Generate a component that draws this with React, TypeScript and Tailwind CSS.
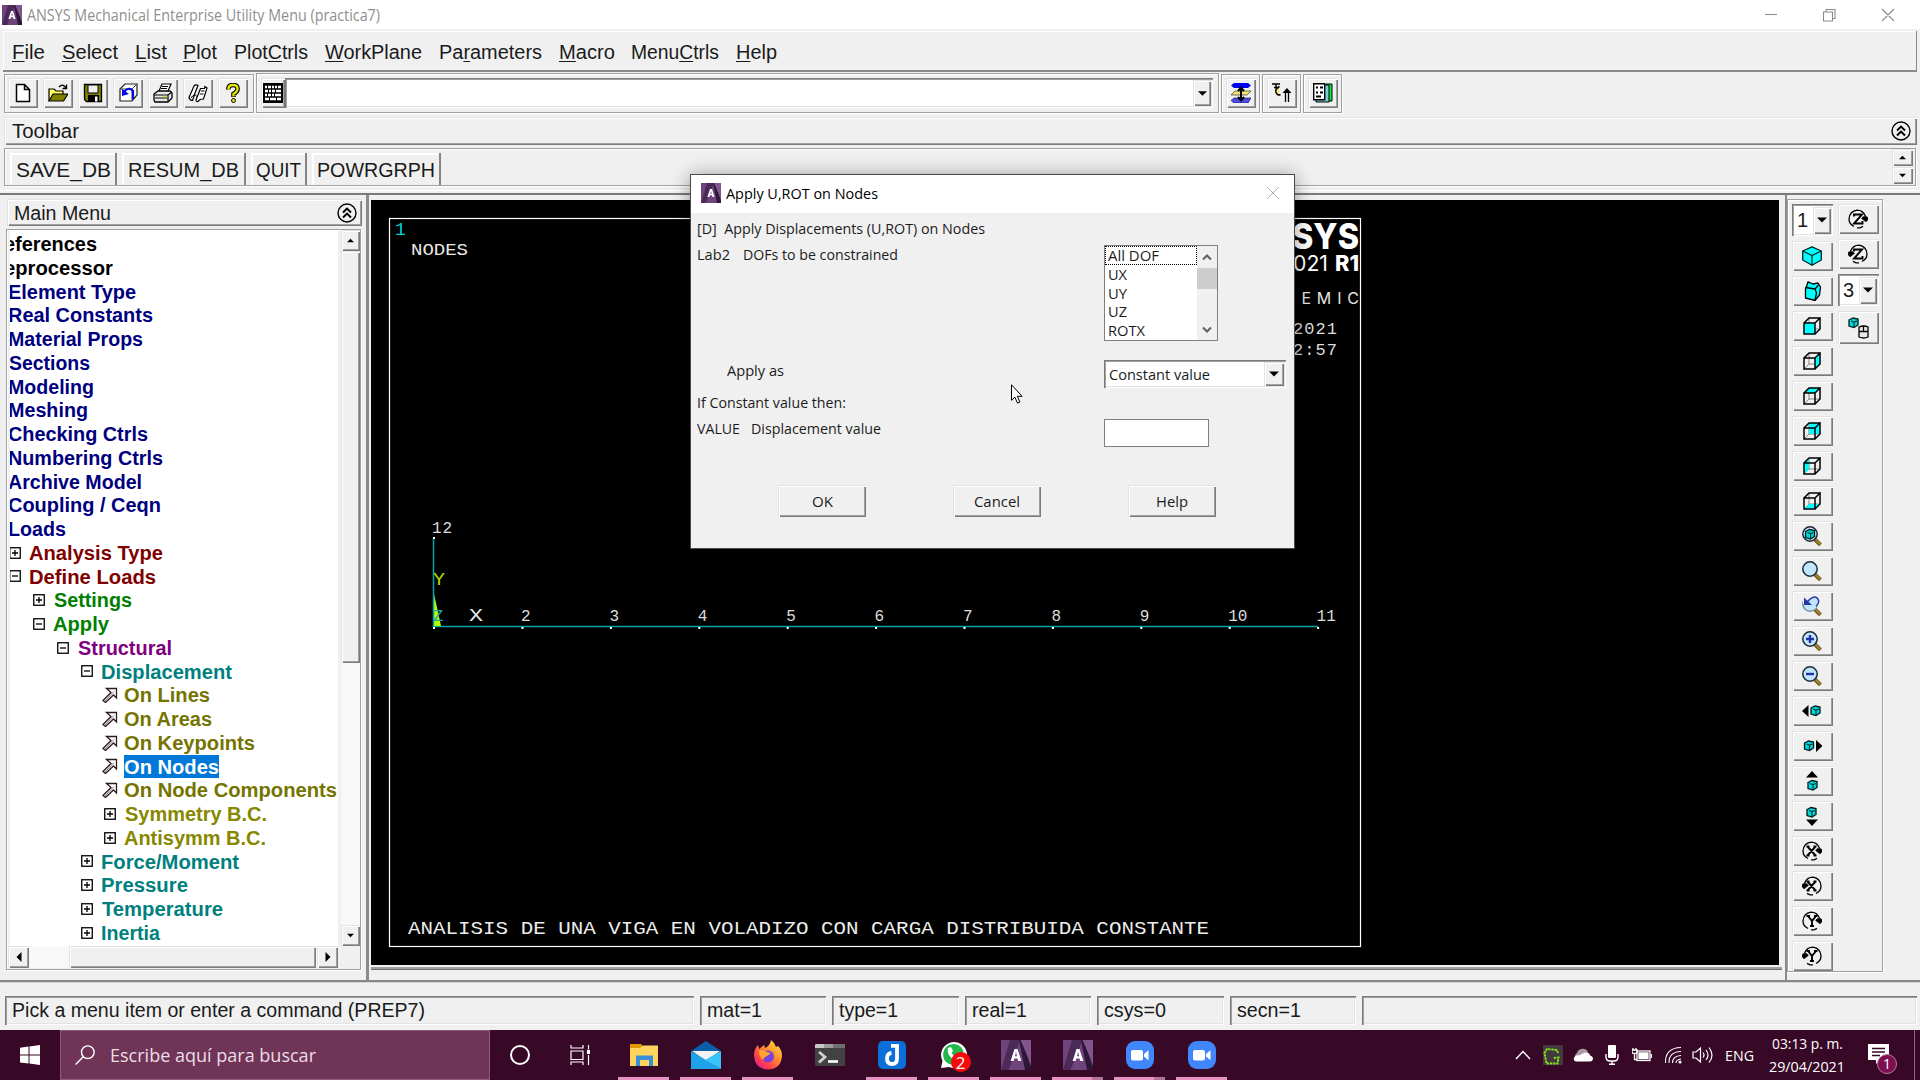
import React, { useLayoutEffect, useRef, useState } from "react";

const RAISED = "bg-[#f0f0f0] shadow-[inset_1px_1px_0_#e3e3e3,inset_2px_2px_0_#fff,inset_-1px_-1px_0_#7a7a7a,inset_-2px_-2px_0_#a0a0a0]";
const SUNKEN = "shadow-[inset_1px_1px_0_#7a7a7a,inset_2px_2px_0_#a0a0a0,inset_-1px_-1px_0_#fff,inset_-2px_-2px_0_#e3e3e3]";
const GROOVE = "border border-[#a0a0a0] shadow-[inset_1px_1px_0_#fff,1px_1px_0_#fff]";
const ARIAL = "font-['Liberation_Sans',Arial,sans-serif]";
const SEGOE = "font-['Open_Sans','Noto_Sans',sans-serif]";

/* Single line of text stretched horizontally to a given width. */
function Fit({ w, children, className = "" }: { w: number; children: React.ReactNode; className?: string }) {
  const ref = useRef<HTMLSpanElement>(null);
  const [k, setK] = useState(1);
  useLayoutEffect(() => {
    if (ref.current && ref.current.offsetWidth) setK(w / ref.current.getBoundingClientRect().width);
  }, []);
  return (
    <span className={"block shrink-0 " + className} style={{ width: w }}>
      <span ref={ref} className="inline-block origin-left whitespace-pre" style={{ transform: `scaleX(${k})` }}>
        {children}
      </span>
    </span>
  );
}

function AnsysLogo({ className }: { className: string }) {
  return (
    <svg viewBox="0 0 20 20" preserveAspectRatio="none" className={className}>
      <rect width="20" height="20" fill="#6f437c" />
      <path d="M6 0h7L5 20H0z" fill="#4c2a58" />
      <path d="M12 0h2l6 18v2h-4z" fill="#2f1738" />
      <path d="M13 0h7v16z" fill="#83558f" />
      <path d="M9 6h2l2.600 8h-2.100l-.5-1.700H8.900L8.400 14H6.400zm1 2L9.300 10.800h1.400z" fill="#fff" fillRule="evenodd" />
    </svg>
  );
}

type Row = [string, number, number, string, string?];
const NAVY = "text-[#00007f]";
const TEAL = "text-[#007f7f]";
const OLIVE = "text-[#747400]";
const GOLD = "text-[#878700]";
const ROWS: Row[] = [
  ["eferences", 3, 93, "text-black"],
  ["eprocessor", 3, 109, "text-black"],
  ["Element Type", 7, 128, NAVY],
  ["Real Constants", 7, 145, NAVY],
  ["Material Props", 7, 135, NAVY],
  ["Sections", 8, 81, NAVY],
  ["Modeling", 7, 86, NAVY],
  ["Meshing", 7, 80, NAVY],
  ["Checking Ctrls", 7, 140, NAVY],
  ["Numbering Ctrls", 7, 155, NAVY],
  ["Archive Model", 7, 134, NAVY],
  ["Coupling / Ceqn", 7, 153, NAVY],
  ["Loads", 7, 58, NAVY],
  ["Analysis Type", 28, 134, "text-[#7f0000]", "+"],
  ["Define Loads", 28, 127, "text-[#7f0000]", "-"],
  ["Settings", 53, 78, "text-[#007f00]", "+"],
  ["Apply", 52, 56, "text-[#007f00]", "-"],
  ["Structural", 77, 94, "text-[#7f007f]", "-"],
  ["Displacement", 100, 131, TEAL, "-"],
  ["On Lines", 123, 86, OLIVE, ">"],
  ["On Areas", 123, 88, OLIVE, ">"],
  ["On Keypoints", 123, 131, OLIVE, ">"],
  ["On Nodes", 123, 95, "bg-[#0078d7] text-white", ">"],
  ["On Node Components", 123, 213, OLIVE, ">"],
  ["Symmetry B.C.", 124, 142, GOLD, "+"],
  ["Antisymm B.C.", 123, 142, GOLD, "+"],
  ["Force/Moment", 100, 138, TEAL, "+"],
  ["Pressure", 100, 87, TEAL, "+"],
  ["Temperature", 101, 121, TEAL, "+"],
  ["Inertia", 100, 59, TEAL, "+"],
];
const BOX_X: Record<string, number> = {
  "Analysis Type": 9, "Define Loads": 9, Settings: 33, Apply: 33, Structural: 57, Displacement: 81,
  "Symmetry B.C.": 104, "Antisymm B.C.": 104, "Force/Moment": 81, Pressure: 81, Temperature: 81, Inertia: 81,
};

function TreeRow({ row }: { row: Row }) {
  const [label, x, w, color, mark] = row;
  const mx = mark === ">" ? 102 : BOX_X[label] ?? 0;
  const mw = mark === ">" ? 16 : 12;
  return (
    <div className="flex h-[23.75px] shrink-0 items-center">
      {mark === ">" && (
        <svg viewBox="0 0 16 16" className="h-4 w-4 shrink-0" style={{ marginLeft: mx - 10 }}>
          <path d="M4.500 1.500h10v9.500l-3-3-8 7.500-2.500-2 8-8z" fill="#fff" stroke="#2a1c1c" strokeWidth="1.300" />
          <path d="M3 14l9-9.500" stroke="#8a7a7a" strokeWidth="1" />
        </svg>
      )}
      {(mark === "+" || mark === "-") && (
        <svg viewBox="0 0 12 12" className="h-3 w-3 shrink-0" style={{ marginLeft: mx - 10 }}>
          <rect x=".75" y=".75" width="10.500" height="10.500" fill="#fff" stroke="#000" strokeWidth="1.300" />
          <path d={mark === "+" ? "M3 6h6M6 3v6" : "M3 6h6"} stroke="#000" strokeWidth="1.300" />
        </svg>
      )}
      <span className="shrink-0" style={{ marginLeft: mark ? x + 0.5 - mx - mw : x - 9.5 }}>
        <Fit w={w} className={"h-[23.75px] leading-[24px] " + color}>{label}</Fit>
      </span>
    </div>
  );
}

function Arrow({ dir, s = 8 }: { dir: "u" | "d" | "l" | "r"; s?: number }) {
  const d = { u: "M0 6l4-4 4 4z", d: "M0 2h8l-4 4z", l: "M6 0v8L2 4z", r: "M2 0l4 4-4 4z" }[dir];
  return <svg viewBox="0 0 8 8" width={s} height={s} className="shrink-0"><path d={d} fill="#000" /></svg>;
}

function Collapse() {
  return (
    <svg viewBox="0 0 20 20" className="block h-5 w-5 shrink-0" fill="none" stroke="#000" strokeWidth="1.400">
      <circle cx="10" cy="10" r="9" />
      <path d="M6 9.500l4-4 4 4M6 14.500l4-4 4 4" strokeWidth="1.900" />
    </svg>
  );
}

/* Cube views */
const FACES: Record<string, string> = {
  front: "M1 6h11v11H1z",
  right: "M12 6l5-5v11l-5 5z",
  top: "M1 6l5-5h11l-5 5z",
  back: "M6 1h11v11H6z",
  left: "M1 6l5-5v11l-5 5z",
  bottom: "M1 17l5-5h11l-5 5z",
};
function Wire({ face }: { face: string }) {
  return (
    <svg viewBox="0 0 18 18" className="h-[18px] w-[18px]" fill="none">
      <path d="M6 1v11h11M6 12l-5 5" stroke="#888" />
      <path d={FACES[face]} fill="#00ffff" />
      <path d="M1 6h11v11H1zM1 6l5-5h11l-5 5M17 1v11l-5 5" stroke="#000" strokeWidth="1.500" />
    </svg>
  );
}
function MiniCube({ x, y }: { x: number; y: number }) {
  return (
    <g transform={`translate(${x} ${y})`}>
      <path d="M0 2l4-2 5 1v6L5 9.500 0 8z" fill="#00d8d8" stroke="#001a1a" strokeWidth="1.300" />
      <path d="M2 3l3 1 3-1M5 4v5" stroke="#003838" strokeWidth="1.200" fill="none" />
    </g>
  );
}
function Iso({ turned }: { turned?: boolean }) {
  return turned ? (
    <svg viewBox="0 0 20 20" className="h-5 w-5" fill="#00ffff" stroke="#000" strokeWidth="1.300" strokeLinejoin="round">
      <path d="M6 .8l5 2.200 5-1 2.500 4-1 8-4.500 5.500-9.500-2.500V7.500l1-2z" />
      <path d="M3.500 6.500l9.500 1.500 3.500-4M13 8l1.500 4-1.500 7" fill="none" />
    </svg>
  ) : (
    <svg viewBox="0 0 20 20" className="h-5 w-5" fill="#00ffff" stroke="#00282c" strokeWidth="1.300" strokeLinejoin="round">
      <path d="M10 .8l9.300 4.200v9L10 19.200.7 14V5z" />
      <path d="M.7 5L10 9.500 19.300 5M10 9.500v9.700" fill="none" />
    </svg>
  );
}
function Lens({ kind }: { kind: string }) {
  return (
    <svg viewBox="0 0 20 20" className="h-5 w-5">
      <path d="M12.500 13l6 6" stroke="#7c6420" strokeWidth="4" />
      <path d="M13 13l5.500 5.500" stroke="#a58c40" strokeWidth="1.200" />
      <circle cx="8" cy="8" r="7.200" fill="#bfe6fb" stroke={kind === "back" ? "#7a8ba0" : "#1d2a38"} strokeWidth="1.500" />
      {kind === "fit" && <MiniCube x={3.500} y={3.500} />}
      {kind === "back" && <><path d="M1 0h8l10 0v8H1z" fill="#f0f0f0" /><path d="M2 9a7 7 0 0 0 12 3L16 3 9 2z" fill="#bfe6fb" /><path d="M5 6q7-8 11-3 2 4-2 7" fill="none" stroke="#2b35a8" strokeWidth="1.500" /><path d="M2 1.500v7.500h8z" fill="#2b35a8" /></>}
      {kind === "in" && <path d="M4 8h8M8 4v8" stroke="#2430a8" strokeWidth="2.400" />}
      {kind === "out" && <path d="M4 8h8" stroke="#2430a8" strokeWidth="2.400" />}
    </svg>
  );
}
function Pan({ dir }: { dir: string }) {
  return (
    <svg viewBox="0 0 20 20" className="h-5 w-5">
      {dir === "l" && <><path d="M6.500 4v12L0 10z" /><MiniCube x={9} y={5} /></>}
      {dir === "r" && <><path d="M14 4v12l6.500-6z" /><MiniCube x={2.500} y={5} /></>}
      {dir === "u" && <><path d="M4 6.500h12L10 0z" /><MiniCube x={6} y={9.500} /></>}
      {dir === "d" && <><path d="M4 13.500h12L10 20z" /><MiniCube x={5} y={1.500} /></>}
    </svg>
  );
}
const AXIS: Record<string, string> = {
  X: "M5.500 5.500l8 9M13.500 5.500l-8 9M4.500 5.500h3M11.500 5.500h3M4.500 14.500h3M11.500 14.500h3",
  Y: "M6 5l4 5 4-5M10 10v5M4.500 5h3.500M12 5h3.500M8 15h4",
  Z: "M6 7.500V5.500h8L6 14.500h8.500V12",
};
function Rot({ axis, ccw }: { axis: string; ccw?: boolean }) {
  return (
    <svg viewBox="0 0 20 20" className="h-5 w-5" fill="none" stroke="#000">
      <g transform={ccw ? "translate(20 0) scale(-1 1)" : undefined}>
        <path d="M6 17.500Q1 15 1 10 1.500 2.500 9 1.200q6 0 8.500 6M9 18.900h3l3-1.500" strokeWidth="1.300" />
        <path d="M13.500 9.500q1-2.500 4-2.200 3 .4 2.800 3L18 13z" fill="#000" strokeWidth=".4" />
      </g>
      <path d={AXIS[axis]} strokeWidth="1.900" />
    </svg>
  );
}

function Btn({ children, className = "" }: { children?: React.ReactNode; className?: string }) {
  return <div className={`flex shrink-0 items-center justify-center ${RAISED} ${className}`}>{children}</div>;
}

/* File toolbar icons */
const NEW = <path d="M3.500 1.500h8l5 5v12h-13zM11.500 1.500v5h5" fill="#fff" stroke="#000" strokeWidth="1.500" />;
const OPEN = (
  <>
    <path d="M1 18V6h5l2 2h7v3" fill="#ffff66" stroke="#000" strokeWidth="1.200" />
    <path d="M1 18l4-7h15l-4.500 7z" fill="#808000" stroke="#000" strokeWidth="1.200" />
    <path d="M11 4q4-4 7 1M18.500 1.500v4h-4" fill="none" stroke="#000" strokeWidth="1.300" />
  </>
);
const SAVE = (
  <>
    <path d="M1.500 1.500h17v17h-15l-2-2z" fill="#808000" stroke="#000" strokeWidth="1.300" />
    <path d="M5 2h10v8H5z" fill="#f0f0f0" stroke="#000" />
    <path d="M5 12h11v7H5z" fill="#000" /><path d="M12 13.500h2.500v5H12z" fill="#fff" />
  </>
);
const RESUME = (
  <>
    <path d="M2 6l5-5h12v11l-5 6H2z" fill="#fff" stroke="#222" strokeWidth="1.200" />
    <path d="M2 6h12v12M14 6l5-5" fill="none" stroke="#444" />
    <path d="M6 9q5-6 9-1v8" fill="none" stroke="#0000ee" strokeWidth="2.200" /><path d="M4 6v7l7-2z" fill="#0000ee" />
  </>
);
const PRINT = (
  <>
    <path d="M6 8l3-7h9l-3 7" fill="#fff" stroke="#000" strokeWidth="1.200" />
    <path d="M1 11l4-3h12l2 2v5l-4 4H2l-1-2z" fill="#e8e8e8" stroke="#000" strokeWidth="1.300" />
    <path d="M1 12h14l4-3M15 12v6M2 15h12M9 3.500h6M8 5.500h6" fill="none" stroke="#000" strokeWidth="1.200" />
    <path d="M10 13.500h3" stroke="#dede00" strokeWidth="1.500" />
  </>
);
const REPORT = (
  <>
    <path d="M1 14.500L6 3q2-2 4-.5L7 10l-2.500 7.500q-2.500 0-3.500-3z" fill="#fff" stroke="#000" strokeWidth="1.200" />
    <path d="M8 17L12.500 5.500h4l.5-2 2 1.500-3.500 11-3.500.5-2 2q-2 .5-2-1.500z" fill="#fff" stroke="#000" strokeWidth="1.200" />
    <path d="M12.800 8h3.700M11.800 11h3.700M3 15q3-5 6-1.500" fill="none" stroke="#000" />
  </>
);
const QUERY = (
  <>
    <path d="M5.500 6.500Q5 2 10 2t4.500 4.500Q14 9 10.500 11v3" fill="none" stroke="#000" strokeWidth="4.600" />
    <path d="M5.500 6.500Q5 2 10 2t4.500 4.500Q14 9 10.500 11v2.500" fill="none" stroke="#e6e600" strokeWidth="2.400" />
    <circle cx="10.500" cy="17.500" r="2" fill="#e6e600" stroke="#000" />
  </>
);
const FILE_ICONS = [NEW, OPEN, SAVE, RESUME, PRINT, REPORT, QUERY];

const MENUS: [string, number, number][] = [
  ["File", 0, 33], ["Select", 0, 56], ["List", 0, 32], ["Plot", 0, 34], ["PlotCtrls", 4, 74],
  ["WorkPlane", 0, 97], ["Parameters", 2, 103], ["Macro", 0, 56], ["MenuCtrls", 4, 88], ["Help", 0, 41],
];

function GraphicsView() {
  const nums = ["2", "3", "4", "5", "6", "7", "8", "9", "10", "11"];
  return (
    <svg viewBox="371 200 1408 765" width="1408" height="765" className="block bg-black" fontFamily="'Liberation Mono','Courier New',monospace">
      <rect x="389.500" y="218.500" width="971" height="728" fill="none" stroke="#fff" strokeWidth="1.200" />
      <text x="395" y="235" fontSize="18" fill="#00d7d7">1</text>
      <text x="411" y="255" fontSize="16" fill="#e8e8e8" textLength="57" lengthAdjust="spacingAndGlyphs">NODES</text>
      <path d="M433 626.500h885" stroke="#00a5a5" strokeWidth="1.700" fill="none" />
      <path d="M434 594l7 32h-7z" fill="#b4ff00" />
      <path d="M433.500 538v89" stroke="#00a5a5" strokeWidth="1.500" />
      <text x="432" y="533" fontSize="16" fill="#ddd" textLength="20">12</text>
      <text x="433" y="585" fontSize="18" fill="#a8e000" textLength="12" lengthAdjust="spacingAndGlyphs">Y</text>
      <text x="433" y="621" fontSize="17" fill="#1fa5b0">Z</text>
      <text x="469" y="621" fontSize="18" fill="#e8e8e8" textLength="14" lengthAdjust="spacingAndGlyphs">X</text>
      {nums.map((n, i) => (
        <g key={n}>
          <text x={521 + i * 88.400} y="621" fontSize="16" fill="#ddd">{n}</text>
          <rect x={521.500 + i * 88.400} y="627" width="2" height="2" fill="#fff" />
        </g>
      ))}
      <rect x="433" y="537" width="2" height="2" fill="#fff" /><rect x="433" y="627" width="2" height="2" fill="#fff" />
      <text x="408" y="934" fontSize="19" fill="#ececec" textLength="801" lengthAdjust="spacingAndGlyphs">
        ANALISIS DE UNA VIGA EN VOLADIZO CON CARGA DISTRIBUIDA CONSTANTE
      </text>
      <g fill="#fff">
        <g fontFamily="Inter,'Open Sans',sans-serif">
          <text x="1292" y="249" fontSize="36" fontWeight="800" textLength="67" lengthAdjust="spacingAndGlyphs">SYS</text>
          <text x="1293" y="271" fontSize="21" textLength="35" lengthAdjust="spacingAndGlyphs">021</text>
          <text x="1335" y="271" fontSize="21" fontWeight="800" textLength="24" lengthAdjust="spacingAndGlyphs">R1</text>
          <text x="1284" y="304" fontSize="16" textLength="75" fill="#e4e4e4">DEMIC</text>
        </g>
        <text x="1293" y="334" fontSize="17" textLength="44" fill="#ddd">2021</text>
        <text x="1293" y="355" fontSize="17" textLength="44" fill="#ddd">2:57</text>
      </g>
    </svg>
  );
}

function Dialog() {
  return (
    <div className={`absolute left-[690px] top-[174px] flex h-[375px] w-[605px] flex-col border border-[#4a4a4a] bg-[#f0f0f0] text-[15px] leading-[20px] text-[#1c1c1c] shadow-[0_2px_18px_rgba(0,0,0,0.4)] ${SEGOE}`}>
      <div className="flex h-[38px] shrink-0 items-center bg-white pb-[2px] pl-[10px] pr-[14px] text-black">
        <AnsysLogo className="h-5 w-5" />
        <Fit w={152} className="ml-[5px]">Apply U,ROT on Nodes</Fit>
        <svg viewBox="0 0 14 14" className="ml-auto h-[14px] w-[14px]" stroke="#b4b4b4"><path d="M1 1l12 12M13 1L1 13" /></svg>
      </div>
      <div className="ml-[6px] mt-[5px] flex"><Fit w={288}>{"[D]  Apply Displacements (U,ROT) on Nodes"}</Fit></div>
      <div className="ml-[6px] mt-[6px] flex h-[103px] items-start">
        <Fit w={33}>Lab2</Fit>
        <Fit w={155} className="ml-[13px]">DOFs to be constrained</Fit>
        <div className="ml-auto mr-[76px] mt-px flex h-[96px] w-[114px] border border-[#7f7f7f] bg-white">
          <div className="flex w-[92px] flex-col">
            {([["All DOF", 51], ["UX", 19], ["UY", 19], ["UZ", 19], ["ROTX", 37]] as [string, number][]).map(([t, w], i) => (
              <div key={t} className={`flex h-[18.7px] shrink-0 items-center pl-[2px] ${i === 0 ? "border border-dotted border-black" : "ml-[1px]"}`}>
                <Fit w={w}>{t}</Fit>
              </div>
            ))}
          </div>
          <div className="flex w-5 flex-col items-center justify-between bg-[#f0f0f0]">
            <svg viewBox="0 0 10 8" className="mt-[7px] h-2 w-[10px]" fill="none" stroke="#606060" strokeWidth="2"><path d="M1 6.500l4-4 4 4" /></svg>
            <div className="mb-[31px] h-[21px] w-5 bg-[#cdcdcd]" />
            <svg viewBox="0 0 10 8" className="mb-[6px] h-2 w-[10px]" fill="none" stroke="#606060" strokeWidth="2"><path d="M1 1.500l4 4 4-4" /></svg>
          </div>
        </div>
      </div>
      <div className="ml-[36px] mt-[13px] flex h-[32px] items-start">
        <Fit w={57}>Apply as</Fit>
        <div className={`ml-auto mr-[8px] flex h-[28px] w-[182px] items-center bg-white pl-[5px] pr-[2px] ${SUNKEN}`}>
          <Fit w={101}>Constant value</Fit>
          <Btn className="ml-auto h-[24px] w-[20px]"><Arrow dir="d" s={10} /></Btn>
        </div>
      </div>
      <div className="ml-[6px] flex"><Fit w={149}>If Constant value then:</Fit></div>
      <div className="ml-[6px] mt-[6px] flex h-[67px] items-start">
        <Fit w={43}>VALUE</Fit>
        <Fit w={130} className="ml-[11px]">Displacement value</Fit>
        <div className="ml-auto mr-[85px] mt-px h-[28px] w-[105px] border border-[#7f7f7f] bg-white" />
      </div>
      <div className="ml-[87px] flex gap-[87px]">
        {([["OK", 21], ["Cancel", 46], ["Help", 32]] as [string, number][]).map(([t, w]) => (
          <Btn key={t} className="h-[32px] w-[88px]"><Fit w={w}>{t}</Fit></Btn>
        ))}
      </div>
      <svg viewBox="0 0 12 20" className="absolute left-[320px] top-[209px] h-5 w-3" fill="#fff" stroke="#000">
        <path d="M.5 .8v15.500l3.400-3.200 2.600 6 2.400-1-2.600-5.800h4.800z" />
      </svg>
    </div>
  );
}

function Zoomus() {
  return (
    <svg viewBox="0 0 30 30" className="h-[30px] w-[30px]">
      <rect x="1" y="1" width="28" height="28" rx="9" fill="#4087fc" />
      <rect x="6" y="10" width="12" height="10.500" rx="2" fill="#fff" /><path d="M19 14l4.500-3.800v10L19 16.500z" fill="#fff" />
    </svg>
  );
}

const TASKS: { icon: React.ReactNode; line: number }[] = [
  { line: 1, icon: <svg viewBox="0 0 30 30" className="h-[30px] w-[30px]"><path d="M1 4h11l2 2.500V10H1z" fill="#e09a00" /><path d="M1 8h10l3-2.500h15V26H1z" fill="#ffd45e" /><path d="M7 26V15.500h17V26h-4v-6h-9v6z" fill="#3a8fd8" /></svg> },
  { line: 1, icon: <svg viewBox="0 0 30 30" className="h-[30px] w-[30px]"><path d="M0 11L15 1l15 10z" fill="#0b5ea8" /><path d="M1 11h28L15 21z" fill="#f3f3f3" /><path d="M0 11l30 18H0z" fill="#1fa2e8" /><path d="M30 11L14 20l16 9z" fill="#38c4f8" /></svg> },
  { line: 1, icon: (
    <svg viewBox="0 0 30 30" className="h-[30px] w-[30px]">
      <defs><linearGradient id="fx" x1="1" y1="0" x2=".2" y2="1"><stop offset="0" stopColor="#fff04a" /><stop offset=".45" stopColor="#ff9130" /><stop offset=".8" stopColor="#ff3a50" /><stop offset="1" stopColor="#d8209a" /></linearGradient></defs>
      <path d="M18 0q4 3 5 7l2-1q4 4 4 10-1 13-14 13.500Q2 29 1 16q0-7 4-11l1 4 5-4q1 2 1 3 5-2 6-8z" fill="url(#fx)" />
      <circle cx="15" cy="16.500" r="6" fill="#7a3fe0" /><path d="M6 11q4-2 8 1l4 1-4 3q-3 1-4 4-4-3-4-9z" fill="#ffa52e" />
    </svg>) },
  { line: 0, icon: <svg viewBox="0 0 30 30" className="h-[30px] w-[30px]"><rect y="4" width="30" height="22" rx="1" fill="#424242" /><path d="M1 4h8v4H0V5z" fill="#c8c8c8" /><path d="M9 4h9v4H9z" fill="#9b9b9b" /><path d="M18 4h12v4H18z" fill="#6f6f6f" /><path d="M4 12l6 5-6 5.500" fill="none" stroke="#d0d0d0" strokeWidth="2.800" /><path d="M13 21.500h10" stroke="#fff" strokeWidth="2.600" /></svg> },
  { line: 1, icon: <svg viewBox="0 0 30 30" className="h-[30px] w-[30px]"><rect x="1" y="1" width="28" height="28" rx="5" fill="#0a6fd6" /><path d="M14 5.800h6V19q0 5-5 5t-5-5.500q0-5 4.500-5.500" fill="none" stroke="#fff" strokeWidth="3.800" /></svg> },
  { line: 1, icon: <span className="relative block h-[30px] w-[30px]"><svg viewBox="0 0 30 30" className="h-[30px] w-[30px]"><path d="M2 28l1.500-7A13 13 0 1 1 10 27z" fill="#fff" /><circle cx="14.500" cy="14.500" r="10.500" fill="#22b84c" /><path d="M9 8l3-1 2 4-1.500 2q2 3 4 4l2-2 3 2-1 3q-3 2-7-1-6-5-4.500-11z" fill="#fff" /></svg><span className="absolute left-[12px] top-[12px] flex h-5 w-5 items-center justify-center rounded-full bg-[#f8090b] text-[17px] leading-none text-white">2</span></span> },
  { line: 1, icon: <AnsysLogo className="h-[30px] w-[30px]" /> },
  { line: 2, icon: <AnsysLogo className="h-[30px] w-[30px]" /> },
  { line: 2, icon: <Zoomus /> },
  { line: 1, icon: <Zoomus /> },
];

function Taskbar() {
  return (
    <div className={`flex h-[50px] shrink-0 bg-[#380927] text-white ${SEGOE}`}>
      <div className="flex w-[60px] items-center justify-center">
        <svg viewBox="0 0 20 20" className="h-5 w-5" fill="#fff"><path d="M0 2.800L8.500 1.600v8H0zM9.500 1.400L20 0v9.600H9.500zM0 10.500h8.500v8.100L0 17.400zM9.500 10.500H20V20L9.500 18.600z" /></svg>
      </div>
      <div className="flex w-[430px] items-center border border-[#8d5c78] bg-[#6f3456] pl-[14px] text-[18px] text-[#ecdde6]">
        <svg viewBox="0 0 20 20" className="h-5 w-5" fill="none" stroke="#fff" strokeWidth="1.400"><circle cx="12.800" cy="7.200" r="6.300" /><path d="M8.300 11.700L.6 19.400" /></svg>
        <Fit w={206} className="ml-[15px]">Escribe aquí para buscar</Fit>
      </div>
      <div className="flex w-[60px] items-center justify-center"><div className="h-5 w-5 rounded-full border-[2.5px] border-white" /></div>
      <div className="flex w-[60px] items-center justify-center">
        <svg viewBox="0 0 20 20" className="h-5 w-5" fill="none" stroke="#fff" strokeWidth="1.200"><path d="M1 0v3h12V0M1 6h12v8.500H1zM1 20v-3h12v3M18.500 0v4.500M18.500 10v10" /><path d="M17.500 5.500h2.500v3h-2.500z" fill="#fff" /></svg>
      </div>
      <div className="ml-[8px] flex gap-[11px]">
        {TASKS.map((t, i) => (
          <div key={i} className="flex w-[51px] flex-col items-center justify-between pt-[10px]">
            {t.icon}
            {t.line === 1 && <div className="h-[3px] w-full bg-[#e693c3]" />}
            {t.line === 2 && <div className="flex h-[3px] w-full"><div className="w-[40px] bg-[#e693c3]" /><div className="flex-1 bg-[#b2739a]" /></div>}
            {t.line === 0 && <div className="h-[3px]" />}
          </div>
        ))}
      </div>
      <div className="ml-auto flex items-center text-[15px]">
        <svg viewBox="0 0 16 10" className="h-[10px] w-4" fill="none" stroke="#fff" strokeWidth="1.400"><path d="M1 9l7-7.500L15 9" /></svg>
        <svg viewBox="0 0 20 20" className="ml-3 h-5 w-5"><rect width="20" height="20" fill="#43393f" /><path d="M15 8L14 5 4 4 1.500 8l2 10.500h11l1-6-5 .5" fill="none" stroke="#84e817" strokeWidth="1.900" strokeDasharray="2.400 .8" /></svg>
        <svg viewBox="0 0 20 14" className="ml-[10px] h-[14px] w-5"><path d="M4 12A4 4 0 0 1 4 5a6 6 0 0 1 11-1l-6 8z" fill="#a99aa4" /><path d="M3 13.500q-3-1-2-4 2-3 5-2l6-3q5 0 5 3 3 .5 3 3.500-.5 2.500-3 2.500z" fill="#fff" /></svg>
        <svg viewBox="0 0 14 20" className="ml-[12px] h-5 w-[14px]"><rect x="3" width="8" height="13" rx="1" fill="#fff" /><path d="M1 9v3q0 4 4 4h4q4 0 4-4V9M7 16v3M4 19.300h6" stroke="#fff" fill="none" strokeWidth="1.400" /></svg>
        <svg viewBox="0 0 20 16" className="ml-[13px] h-4 w-5" fill="none" stroke="#fff" strokeWidth="1.300"><rect x="5" y="4" width="13" height="9.500" /><path d="M7 6h9v5.500H7z" fill="#fff" /><path d="M19.300 7v4M1 1v2M4 1v2M0 3h5v2q0 1.500-2.500 1.500T0 5zM2.500 6v6.500H5" /></svg>
        <svg viewBox="0 0 18 18" className="ml-[12px] h-[18px] w-[18px]" fill="none" stroke="#fff" strokeWidth="1.100"><path d="M1.500 17Q1 2 17 1.500M5 17Q4.500 6 17 5.500M8.500 17Q8.500 10 17 9.500M12 17q0-3.500 5-4" /><circle cx="16" cy="16" r="1" fill="#fff" /></svg>
        <svg viewBox="0 0 21 18" className="ml-[10px] h-[18px] w-[21px]" fill="none" stroke="#fff" strokeWidth="1.200"><path d="M1 6v6h3l4.500 4V2L4 6zM11 6.500q2 2.500 0 5M14 4q4 5 0 10M17 1.500q6 7.500 0 15" /></svg>
        <Fit w={29} className="ml-[12px]">ENG</Fit>
        <div className="ml-[15px] flex w-[76px] flex-col items-center gap-[3px] pb-[2px] leading-[20px]"><Fit w={71}>03:13 p. m.</Fit><Fit w={76}>29/04/2021</Fit></div>
        <div className="relative ml-[23px] mr-[25px] h-[22px] w-[21px]">
          <svg viewBox="0 0 21 20" className="h-[20px] w-[21px]"><path d="M0 0h21v16h-9l-4 4v-4H0z" fill="#fff" /><path d="M4 4.500h13M4 8h13M4 11.500h8" stroke="#380927" strokeWidth="1.400" /></svg>
          <span className="absolute left-[9px] top-[10px] flex h-5 w-5 items-center justify-center rounded-full border border-[#b878a0] bg-[#7d0f52] text-[14px] leading-none">1</span>
        </div>
        <div className="mr-[5px] h-[50px] w-px bg-[#8a6a7e]" />
      </div>
    </div>
  );
}

function Combo({ label }: { label: string }) {
  return (
    <div className={`flex h-[32px] w-[41px] shrink-0 items-center bg-white pl-[5px] pr-[2px] text-[20px] ${SUNKEN}`}>
      <span className="w-[12px]">{label}</span>
      <Btn className="ml-auto h-[27px] w-[18px]"><Arrow dir="d" s={10} /></Btn>
    </div>
  );
}

export default function App() {
  const tools = [
    <Iso />, <Iso turned />, <Wire face="front" />, <Wire face="right" />, <Wire face="top" />, <Wire face="back" />,
    <Wire face="left" />, <Wire face="bottom" />, <Lens kind="fit" />, <Lens kind="win" />, <Lens kind="back" />,
    <Lens kind="in" />, <Lens kind="out" />, <Pan dir="l" />, <Pan dir="r" />, <Pan dir="u" />, <Pan dir="d" />,
    <Rot axis="X" />, <Rot axis="X" ccw />, <Rot axis="Y" />, <Rot axis="Y" ccw />,
  ];
  return (
    <div className={`relative flex h-[1080px] w-[1920px] flex-col overflow-hidden bg-[#f0f0f0] text-[20px] leading-[24px] text-[#1a1a1a] ${ARIAL}`}>
      {/* title bar */}
      <div className={`flex h-[29px] shrink-0 items-center bg-white pl-[2px] pr-[25px] text-[16px] text-[#8f8f8f] ${SEGOE}`}>
        <AnsysLogo className="h-5 w-5" />
        <Fit w={353} className="ml-[5px]">ANSYS Mechanical Enterprise Utility Menu (practica7)</Fit>
        <svg viewBox="0 0 130 14" className="ml-auto h-[14px] w-[130px]" fill="none" stroke="#8a8a8a" strokeWidth="1.100">
          <path d="M0 6.500h12M117 1l12 12M129 1l-12 12M58.500 4h9v9h-9zM61 4V1.500h9v9h-2.500" />
        </svg>
      </div>
      {/* menu bar */}
      <div className="mx-[3px] mt-[2px] flex h-[41px] shrink-0 items-center gap-[16.8px] border-b-2 border-r border-[#8a8a8a] pl-[9px] pt-[2px] shadow-[inset_0_1px_0_#fff,inset_1px_0_0_#fff]">
        {MENUS.map(([t, u, w]) => (
          <Fit key={t} w={w}>{t.slice(0, u)}<span className="underline decoration-1 underline-offset-2">{t[u]}</span>{t.slice(u + 1)}</Fit>
        ))}
      </div>
      {/* icon toolbar */}
      <div className="mt-px flex h-[40px] shrink-0 items-center gap-[2px] pl-[4px]">
        <div className={`flex h-[39px] w-[250px] items-center gap-[5px] pl-[3px] ${GROOVE}`}>
          {FILE_ICONS.map((ic, i) => <Btn key={i} className="h-[30px] w-[30px]"><svg viewBox="0 0 20 20" className="h-5 w-5">{ic}</svg></Btn>)}
        </div>
        <div className={`flex h-[40px] w-[963px] items-center pl-[4px] pr-[5px] ${GROOVE}`}>
          <Btn className="h-[30px] w-[24px]">
            <svg viewBox="0 0 20 20" className="h-5 w-5"><rect width="20" height="20" /><path d="M2 4h2M5 4h3M9 4h2M12 4h2M15 4h3M2 8h3M6 8h2M9 8h3M13 8h5M2 12h2M5 12h3M9 12h2M12 12h6M2 16h4M7 16h6M14 16h4" stroke="#fff" strokeWidth="2.300" /></svg>
          </Btn>
          <div className={`flex h-[30px] flex-1 items-center justify-end bg-white pr-[2px] ${SUNKEN}`}>
            <Btn className="h-[26px] w-[18px]"><Arrow dir="d" s={9} /></Btn>
          </div>
        </div>
        <div className={`flex h-[39px] w-[39px] items-center justify-center ${GROOVE}`}><Btn className="h-[30px] w-[30px]">
          <svg viewBox="0 0 20 20" className="h-5 w-5"><path d="M3 0h14l3 2.500L17 5H3L0 2.500z" fill="#0000f0" /><path d="M0 12l4-4h16l-4 4z" fill="#f3e36b" stroke="#333" strokeWidth=".7" /><path d="M3 15h17l-3 5H3l-3-2.500z" fill="#4d4de0" stroke="#000060" strokeWidth=".6" /><path d="M10 5v12M7 8l3-3.500L13 8M7 14l3 3.500 3-3.500" stroke="#000" strokeWidth="2" fill="none" /></svg>
        </Btn></div>
        <div className={`flex h-[39px] w-[39px] items-center justify-center ${GROOVE}`}><Btn className="h-[30px] w-[30px]">
          <svg viewBox="0 0 20 20" className="h-5 w-5"><path d="M4 3h3v9H4z" fill="#f3e36b" /><path d="M0 1h8M4 1v4M2 4.500h5M7.500 3.500Q2.500 6 4 9.500t4.500 2" fill="none" stroke="#000" strokeWidth="1.400" /><path d="M10.500 10L15 5l4.500 5z" /><path d="M13.500 9v10M16.500 9v10" stroke="#000" strokeWidth="1.300" /></svg>
        </Btn></div>
        <div className={`flex h-[39px] w-[39px] items-center justify-center ${GROOVE}`}><Btn className="h-[30px] w-[30px]">
          <svg viewBox="0 0 20 20" className="h-5 w-5" stroke="#000"><path d="M13 1h6v17h-6z" fill="#00f43c" /><path d="M3 2h13v17H3z" fill="#7ccdd6" /><path d="M.7 .7h11v16H.7z" fill="#fff" strokeWidth="1.400" /><path d="M3 4.500h2M7 4.500h3M3 9.500h2M7 9.500h3M3 13.500h5" strokeWidth="2" /></svg>
        </Btn></div>
      </div>
      {/* toolbar header */}
      <div className={`ml-[4px] mr-[3px] mt-[4px] flex h-[28px] shrink-0 items-center pl-[8px] pr-[6px] ${RAISED}`}>
        <Fit w={67}>Toolbar</Fit>
        <span className="ml-auto"><Collapse /></span>
      </div>
      <div className={`ml-[4px] mr-[4px] mt-[3px] flex h-[38px] shrink-0 items-end pl-[5px] pr-[2px] ${GROOVE}`}>
        <div className="flex items-end gap-[5px]">
          {([["SAVE_DB", 95, 107], ["RESUM_DB", 111, 124], ["QUIT", 45, 56], ["POWRGRPH", 118, 129]] as [string, number, number][]).map(([t, w, b]) => (
            <div key={t} className="flex h-[32px] items-center justify-center border-r-2 border-[#858585] pl-px pt-px shadow-[inset_2px_2px_0_#fff]" style={{ width: b }}><Fit w={w}>{t}</Fit></div>
          ))}
        </div>
        <div className="ml-auto mb-px flex h-[35px] flex-col justify-between">
          <Btn className="h-[17px] w-[21px]"><Arrow dir="u" s={7} /></Btn>
          <Btn className="h-[17px] w-[21px]"><Arrow dir="d" s={7} /></Btn>
        </div>
      </div>
      <div className="mt-[4px] h-[5px] shrink-0 border-b-2 border-t border-b-[#7a7a7a] border-t-white bg-[#f0f0f0]" />

      {/* work area */}
      <div className="flex h-[785px] shrink-0">
        <div className="flex w-[369px] shrink-0 flex-col border-r-[3px] border-[#8a8a8a] pl-[6px] pt-[4px]">
          <div className={`ml-px flex h-[27px] w-[355px] shrink-0 items-center pl-[7px] pr-[5px] ${RAISED}`}>
            <Fit w={97}>Main Menu</Fit>
            <span className="ml-auto"><Collapse /></span>
          </div>
          <div className={`mt-[3px] flex h-[741px] w-[355px] flex-col ${GROOVE}`}>
            <div className="flex h-[716px] shrink-0">
              <div className="ml-[3px] w-[328px] shrink-0 overflow-hidden bg-white pt-[2px] text-[20px] font-bold">
                {ROWS.map((r) => <TreeRow key={r[0]} row={r} />)}
              </div>
              <div className="ml-[3px] flex w-[19px] flex-col bg-[#f8f8f8]">
                <Btn className="h-[21px] w-[19px]"><Arrow dir="u" s={7} /></Btn>
                <Btn className="h-[412px] w-[19px]" />
                <Btn className="mt-auto h-[21px] w-[19px]"><Arrow dir="d" s={7} /></Btn>
              </div>
            </div>
            <div className="ml-px flex h-[22px] w-[330px] bg-[#f8f8f8]">
              <Btn className="h-[22px] w-[21px]"><Arrow dir="l" s={10} /></Btn>
              <Btn className="ml-[40px] h-[22px] w-[247px]" />
              <Btn className="ml-auto h-[22px] w-[21px]"><Arrow dir="r" s={10} /></Btn>
            </div>
          </div>
        </div>
        <div className="w-[1416px] shrink-0 pl-[2px] pt-[5px]">
          <GraphicsView />
          <div className="mt-[2px] h-[3px] w-[1411px] border-b border-t border-b-[#707070] border-t-[#a0a0a0] bg-[#a0a0a0]" />
        </div>
        <div className="flex flex-1 border-l-2 border-[#8a8a8a] pt-[4px]">
          <div className={`flex h-[773px] w-[96px] gap-[5px] pl-[4px] pt-[4px] ${GROOVE}`}>
            <div className="flex w-[41px] flex-col gap-[5px]">
              <Combo label="1" />
              {tools.map((t, i) => <Btn key={i} className="h-[30px] w-[41px] pr-px">{t}</Btn>)}
            </div>
            <div className="flex w-[41px] flex-col gap-[5px]">
              <Btn className="h-[30px] w-[41px] pr-px"><Rot axis="Z" /></Btn>
              <Btn className="h-[30px] w-[41px] pr-px"><Rot axis="Z" ccw /></Btn>
              <Combo label="3" />
              <Btn className="h-[33px] w-[41px]">
                <svg viewBox="0 0 22 22" className="h-[22px] w-[22px]" fill="none" stroke="#000"><MiniCube x={1} y={1} /><path d="M11 10q5-2 9 0v10q-4 2-9 0z" fill="#e8e8e8" strokeWidth="1.300" /><path d="M11 14.500h9M15.500 9v6" strokeWidth="1.300" /></svg>
              </Btn>
            </div>
          </div>
        </div>
      </div>
      <div className="h-[3px] shrink-0 border-t-2 border-[#868686] bg-[#d8d8d8]" />

      {/* status bar */}
      <div className="mt-[13px] flex h-[29px] shrink-0 gap-[6px] pl-[5px] pr-[3px] leading-[29px]">
        <div className={`w-[689px] pl-[7px] ${SUNKEN}`}><Fit w={413}>Pick a menu item or enter a command (PREP7)</Fit></div>
        {([["mat=1", 55], ["type=1", 59], ["real=1", 55], ["csys=0", 62], ["secn=1", 64]] as [string, number][]).map(([t, w]) => (
          <div key={t} className={`w-[126.4px] pl-[7px] ${SUNKEN}`}><Fit w={w}>{t}</Fit></div>
        ))}
        <div className={`flex-1 ${SUNKEN}`} />
      </div>
      <div className="flex-1" />
      <Taskbar />
      <Dialog />
    </div>
  );
}
